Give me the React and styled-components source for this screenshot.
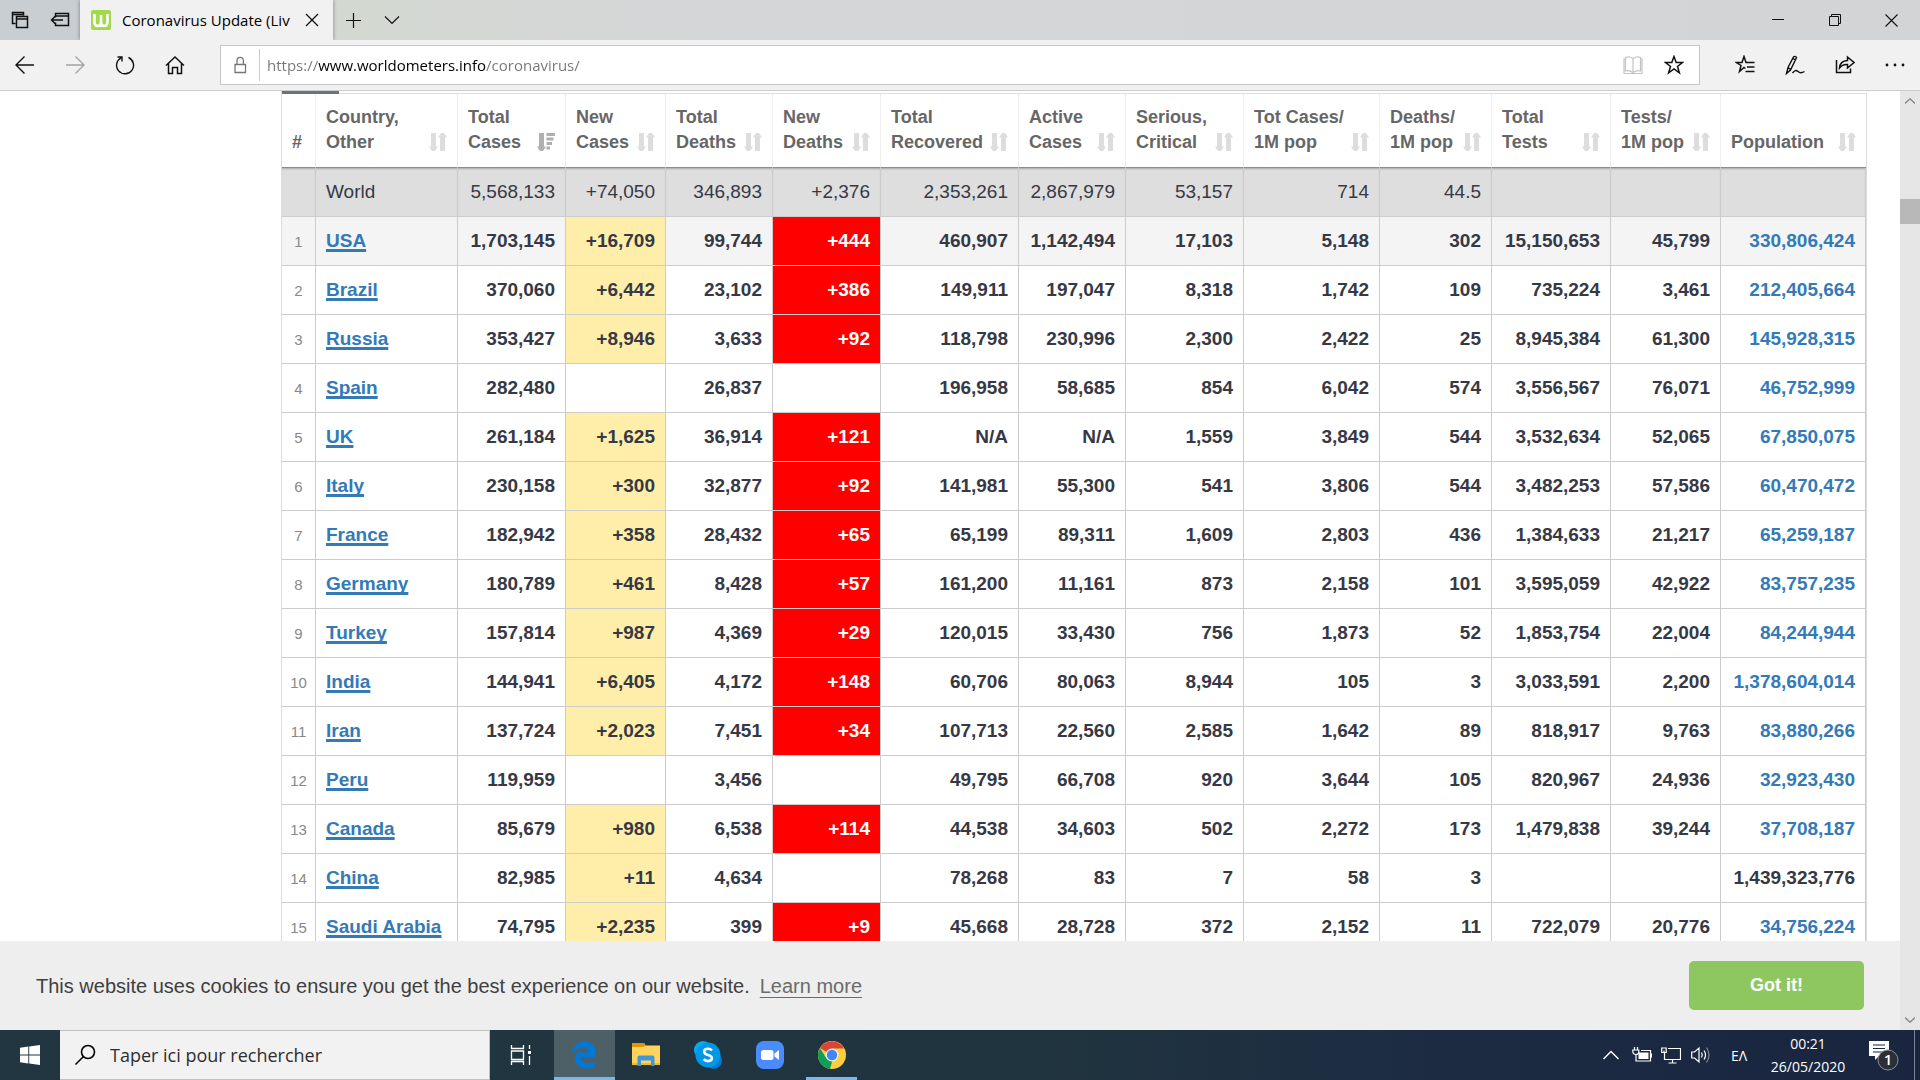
import React from 'react';
import styled, {createGlobalStyle, css} from "styled-components";

const UI_FONT = `"Open Sans", "Noto Sans", sans-serif`;
const PAGE_FONT = `"Liberation Sans", Arial, sans-serif`;

const GlobalStyle = createGlobalStyle`
  * {
    box-sizing: border-box;
  }

  body {
    margin: 0;
    overflow: hidden;
    font-family: ${PAGE_FONT};
  }

  button, input {
    font-family: inherit;
  }
`;

const Screen = styled.div`
  height: 100vh;
  display: flex;
  flex-direction: column;
  background: #ffffff;
`;

/* browser */

const TabBar = styled.div`
  height: 40px;
  flex: none;
  display: flex;
  background: linear-gradient(90deg, #c9ced2 0, #c9ced2 80px, #d3d9d1 340px, #d5d6d6 560px, #d3d4d6 100%);
`;

const IconButton = styled.button`
  width: ${({width}) => width || "50px"};
  height: 100%;
  flex: none;
  display: flex;
  justify-content: center;
  align-items: center;
  padding: 0;
  border: none;
  background: transparent;
  color: ${({tone}) => tone || "#111111"};
`;

const Tab = styled.div`
  width: 253px;
  display: flex;
  align-items: center;
  padding-left: 11px;
  background: #f1f1f1;
  box-shadow: 0 0 4px rgba(0, 0, 0, 0.4);
  clip-path: inset(0 -5px 0 -5px);
`;

const TabTitle = styled.span`
  flex: 1;
  margin-left: 11px;
  white-space: nowrap;
  font-family: ${UI_FONT};
  font-size: 15px;
  line-height: 20px;
  color: #000000;
`;

const Spacer = styled.div`
  flex: 1;
`;

const NavBar = styled.div`
  height: 51px;
  flex: none;
  display: flex;
  align-items: center;
  background: #f1f1f1;
  border-bottom: 1px solid #cccccc;
`;

const AddressBox = styled.label`
  height: 40px;
  flex: 1;
  display: flex;
  align-items: center;
  margin: 0 20px 0 20px;
  padding-right: 4px;
  background: #ffffff;
  border: 1px solid #c6c6c6;
`;

const AddressInput = styled.input`
  height: 32px;
  flex: 1;
  min-width: 0;
  padding: 0 0 0 7px;
  border: none;
  border-left: 1px solid #cccccc;
  outline: none;
  font-family: ${UI_FONT};
  font-size: 15px;
  color: transparent;
  background: linear-gradient(90deg, #767676 0, #767676 58px, #000000 58px, #000000 226px, #767676 226px);
  background-clip: text;
  -webkit-background-clip: text;
`;

/* page */

const Viewport = styled.div`
  flex: 1;
  min-height: 0;
  display: flex;
`;

const Page = styled.main`
  position: relative;
  flex: 1;
  min-width: 0;
  padding: 0 33px 0 281px;
  overflow: hidden;
`;

const ScrollBar = styled.div`
  width: 20px;
  flex: none;
  display: flex;
  flex-direction: column;
  align-items: center;
  background: #e6e6e6;
`;

const ScrollTrack = styled.div`
  width: 100%;
  flex: 1;
  padding-top: 88px;
`;

const ScrollThumb = styled.div`
  height: 25px;
  background: #b8b8b8;
`;

const ScrollArrow = styled.button`
  width: 20px;
  height: 20px;
  display: flex;
  justify-content: center;
  align-items: center;
  padding: 0;
  border: none;
  background: transparent;
  color: #858585;
`;

const TabStrip = styled.div`
  height: 3px;
  border-bottom: 1px solid #dddddd;
  border-left: 1px solid #dddddd;
`;

const ActiveTab = styled.div`
  width: 57px;
  height: 3px;
  background: #6a737b;
`;

const TableFrame = styled.div`
  border-left: 1px solid #dddddd;
  border-right: 1px solid #dddddd;
`;

const Table = styled.table`
  width: 100%;
  table-layout: fixed;
  border-spacing: 0;
  color: #363945;
`;

const HeadCell = styled.th`
  height: 74px;
  padding: 0 10px 12px 10px;
  vertical-align: bottom;
  text-align: left;
  font-size: 18px;
  line-height: 25px;
  color: #666666;
  border-right: 1px solid #eeeeee;
  border-bottom: 1px solid #8c8c8c;
  white-space: pre-line;

  &:last-child {
    border-right: none;
  }
`;

const HeadContent = styled.div`
  display: flex;
  justify-content: space-between;
  align-items: flex-end;
`;

const SortIcon = styled.svg`
  width: 18px;
  height: 18px;
  flex: none;
  margin-bottom: 4px;
  fill: ${({active}) => active ? "#b0b0b0" : "#dddddd"};
`;

const Cell = styled.td`
  height: 49px;
  padding: 0 10px 1px 10px;
  text-align: ${({align}) => align || "right"};
  font-size: 19px;
  font-weight: bold;
  line-height: 25px;
  white-space: nowrap;
  border-right: 1px solid #cccccc;
  border-bottom: 1px solid #cccccc;

  ${({tone}) => tone === "cases" && css`
    background: #ffeeaa;
  `}

  ${({tone}) => tone === "deaths" && css`
    background: #ff0000;
    color: #ffffff;
  `}
`;

const IndexCell = styled(Cell)`
  padding: 0;
  text-align: center;
  font-size: 15px;
  font-weight: normal;
  color: #888888;
`;

const WorldRow = styled.tr`
  background: #dedede;

  td {
    font-weight: normal;
  }

  td:nth-child(n) {
    box-shadow: inset 0 2px 2px -1px rgba(0, 0, 0, 0.25);
  }
`;

const CountryRow = styled.tr`
  background: ${({hovered}) => hovered ? "#f4f4f4" : "#ffffff"};
`;

const CountryLink = styled.a`
  color: #337ab7;
  text-decoration: underline;
  text-decoration-thickness: 3px;
  text-underline-offset: 2px;
  text-decoration-skip-ink: none;
`;

const PopulationLink = styled.a`
  color: #337ab7;
  text-decoration: none;
`;

const CookieBar = styled.div`
  position: absolute;
  left: 0;
  right: 0;
  bottom: 0;
  height: 89px;
  display: flex;
  justify-content: space-between;
  align-items: center;
  padding: 0 36px;
  background: #eeeeee;
  color: #404040;
  font-size: 20px;
  line-height: 30px;
`;

const LearnMore = styled.a`
  margin-left: 10px;
  color: #6b6b6b;
  text-decoration: underline;
  text-decoration-thickness: 1px;
  text-underline-offset: 4px;
`;

const GotIt = styled.button`
  width: 175px;
  height: 49px;
  border: none;
  border-radius: 5px;
  background: #8ec760;
  color: #ffffff;
  font-size: 18px;
  font-weight: bold;
`;

/* taskbar */

const TaskBar = styled.footer`
  height: 50px;
  flex: none;
  display: flex;
  font-family: ${UI_FONT};
  background: linear-gradient(90deg, #213640 0, #20343f 55%, #1c2b42 75%, #1a2540 100%);
`;

const TaskButton = styled.button`
  width: ${({width}) => width || "62px"};
  height: 50px;
  flex: none;
  display: flex;
  justify-content: center;
  align-items: center;
  padding: 0;
  border: none;
  background: ${({active}) => active ? "#4d6067" : "transparent"};
  box-shadow: ${({open}) => open ? "inset 0 -3px 0 #76b9ed" : "none"};
  color: #ffffff;
`;

const SearchBox = styled.label`
  width: 430px;
  display: flex;
  align-items: center;
  padding-left: 14px;
  background: #f2f2f2;
  border: 1px solid #bfbfbf;
  border-left: none;
`;

const SearchInput = styled.input`
  flex: 1;
  min-width: 0;
  margin-left: 14px;
  padding: 0;
  border: none;
  outline: none;
  background: transparent;
  font-family: ${UI_FONT};
  font-size: 18px;

  &::placeholder {
    color: #2e2e2e;
    opacity: 1;
  }
`;

const Apps = styled.div`
  display: flex;
  margin-right: 5px;
`;

const TrayText = styled.button`
  width: ${({width}) => width};
  padding: 0;
  border: none;
  background: transparent;
  color: #ffffff;
  font-family: ${UI_FONT};
  font-size: 14px;
  line-height: 23px;
  text-align: center;
`;

const ShowDesktop = styled.div`
  width: 6px;
  border-left: 1px solid #7b8494;
`;

const Line = ({size = 20, width = size, sw = 1.4, children}) => (
    <svg
        width={width} height={size} viewBox={`0 0 ${width} ${size}`}
        fill="none" stroke="currentColor" strokeWidth={sw} aria-hidden="true"
    >
        {children}
    </svg>
);

const columns = [
    {title: "#", width: 34},
    {title: "Country,\nOther", width: 142},
    {title: "Total\nCases", width: 108, active: true},
    {title: "New\nCases", width: 100},
    {title: "Total\nDeaths", width: 107},
    {title: "New\nDeaths", width: 108},
    {title: "Total\nRecovered", width: 138},
    {title: "Active\nCases", width: 107},
    {title: "Serious,\nCritical", width: 118},
    {title: "Tot Cases/\n1M pop", width: 136},
    {title: "Deaths/\n1M pop", width: 112},
    {title: "Total\nTests", width: 119},
    {title: "Tests/\n1M pop", width: 110},
    {title: "Population", width: 145},
];

const world = ["5,568,133", "+74,050", "346,893", "+2,376", "2,353,261", "2,867,979", "53,157", "714", "44.5", "", "", ""];

const countries = [
    ["USA", "1,703,145", "+16,709", "99,744", "+444", "460,907", "1,142,494", "17,103", "5,148", "302", "15,150,653", "45,799", "330,806,424"],
    ["Brazil", "370,060", "+6,442", "23,102", "+386", "149,911", "197,047", "8,318", "1,742", "109", "735,224", "3,461", "212,405,664"],
    ["Russia", "353,427", "+8,946", "3,633", "+92", "118,798", "230,996", "2,300", "2,422", "25", "8,945,384", "61,300", "145,928,315"],
    ["Spain", "282,480", "", "26,837", "", "196,958", "58,685", "854", "6,042", "574", "3,556,567", "76,071", "46,752,999"],
    ["UK", "261,184", "+1,625", "36,914", "+121", "N/A", "N/A", "1,559", "3,849", "544", "3,532,634", "52,065", "67,850,075"],
    ["Italy", "230,158", "+300", "32,877", "+92", "141,981", "55,300", "541", "3,806", "544", "3,482,253", "57,586", "60,470,472"],
    ["France", "182,942", "+358", "28,432", "+65", "65,199", "89,311", "1,609", "2,803", "436", "1,384,633", "21,217", "65,259,187"],
    ["Germany", "180,789", "+461", "8,428", "+57", "161,200", "11,161", "873", "2,158", "101", "3,595,059", "42,922", "83,757,235"],
    ["Turkey", "157,814", "+987", "4,369", "+29", "120,015", "33,430", "756", "1,873", "52", "1,853,754", "22,004", "84,244,944"],
    ["India", "144,941", "+6,405", "4,172", "+148", "60,706", "80,063", "8,944", "105", "3", "3,033,591", "2,200", "1,378,604,014"],
    ["Iran", "137,724", "+2,023", "7,451", "+34", "107,713", "22,560", "2,585", "1,642", "89", "818,917", "9,763", "83,880,266"],
    ["Peru", "119,959", "", "3,456", "", "49,795", "66,708", "920", "3,644", "105", "820,967", "24,936", "32,923,430"],
    ["Canada", "85,679", "+980", "6,538", "+114", "44,538", "34,603", "502", "2,272", "173", "1,479,838", "39,244", "37,708,187"],
    ["China", "82,985", "+11", "4,634", "", "78,268", "83", "7", "58", "3", "", "", "1,439,323,776"],
    ["Saudi Arabia", "74,795", "+2,235", "399", "+9", "45,668", "28,728", "372", "2,152", "11", "722,079", "20,776", "34,756,224"],
];

const getTone = (value, index) => {
    if (!value) return undefined;
    if (index === 1) return "cases";
    if (index === 3) return "deaths";
    return undefined;
};

const Sort = ({active}) => (
    <SortIcon viewBox="0 0 18 18" active={active ? 1 : undefined} aria-hidden="true">
        <path d="M2 0h5v13.500h2L6 18H3L0 13.500h2z"/>
        {active
            ? <path d="M9.500 0h8.500v3h-8.500zM9.500 4.500h7v3h-7zM9.500 9h5.500v3H9.500zM9.500 13.500h3.500v3H9.500z"/>
            : <path d="M11 18h5V4.500h2L15 0h-3L9 4.500h2z"/>}
    </SortIcon>
);

const BrowserTabs = () => (
    <TabBar>
        <IconButton width="40px" aria-label="Tabs set aside">
            <Line sw={1.5}>
                <path d="M5.500 13.500h-3v-11h11v3M2.500 4.500h11M6.500 6.500h11v11h-11zM6.500 9h11"/>
            </Line>
        </IconButton>
        <IconButton width="40px" aria-label="Set these tabs aside">
            <Line sw={1.5}>
                <path d="M5.500 7.500v-4h13v12h-13v-3M5.500 6h13M13 10H1.500M5 6.500L1.500 10L5 13.500"/>
            </Line>
        </IconButton>
        <Tab>
            <svg width="20" height="20" viewBox="0 0 20 20" aria-hidden="true">
                <rect width="20" height="20" rx="2" fill="#a2d94d"/>
                <path d="M3.500 4v8q0 4 3.200 4t3.300-4V5v7q0 4 3.200 4t3.300-4V4" fill="none" stroke="#fff" strokeWidth="2.600"/>
            </svg>
            <TabTitle>Coronavirus Update (Liv</TabTitle>
            <IconButton width="42px" aria-label="Close tab">
                <Line size={14} sw={1.3}><path d="M1 1l12 12M13 1L1 13"/></Line>
            </IconButton>
        </Tab>
        <IconButton width="40px" aria-label="New tab">
            <Line size={17} sw={1.2}><path d="M8.500 1v15M1 8.500h15"/></Line>
        </IconButton>
        <IconButton width="38px" aria-label="Tab previews">
            <Line size={16} sw={1.2}><path d="M1 4.500l7 7l7-7"/></Line>
        </IconButton>
        <Spacer/>
        <IconButton width="57px" aria-label="Minimize">
            <Line size={12} sw={1}><path d="M0 5.500h12"/></Line>
        </IconButton>
        <IconButton width="57px" aria-label="Restore">
            <Line size={12} sw={1}><path d="M.5 2.500h9v9h-9zM2.500 2.500v-2h9v9h-2"/></Line>
        </IconButton>
        <IconButton width="57px" aria-label="Close">
            <Line size={13} sw={1.1}><path d="M.5 .5l12 12M12.500 .5l-12 12"/></Line>
        </IconButton>
    </TabBar>
);

const BrowserNav = () => (
    <NavBar>
        <IconButton aria-label="Back">
            <Line sw={1.4}><path d="M19 10H1M9.500 1.500L1 10l8.500 8.500"/></Line>
        </IconButton>
        <IconButton tone="#a3a3a3" aria-label="Forward">
            <Line sw={1.4}><path d="M1 10h18M10.500 1.500L19 10l-8.500 8.500"/></Line>
        </IconButton>
        <IconButton aria-label="Refresh">
            <Line sw={1.4}>
                <path d="M13.500 2.500a8.500 8.500 0 1 1-7.500 .3M2.500 2h4.500v4.500"/>
            </Line>
        </IconButton>
        <IconButton aria-label="Home">
            <Line sw={1.5}>
                <path d="M1 10.500l9-8.500l9 8.500M3.500 8.500v10h4v-6h5v6h4v-10"/>
            </Line>
        </IconButton>
        <AddressBox>
            <IconButton as="span" width="38px" tone="#767676">
                <Line width={14} size={18} sw={1.3}>
                    <path d="M2 8.500h10.500v8H2zM4 8.500V4.500a3.200 3.200 0 0 1 6.400 0v4"/>
                </Line>
            </IconButton>
            <AddressInput aria-label="Address" defaultValue="https://www.worldometers.info/coronavirus/"/>
            <IconButton width="40px" tone="#c4c4c4" aria-label="Reading view">
                <Line sw={1.2}>
                    <path d="M10 3.500v14M10 3.500Q6 1 2.500 2.500v13.500Q6 15 10 17.500Q14 15 17.500 16V2.500Q14 1 10 3.500M2.500 4H1v14.500h18V4h-1.500"/>
                </Line>
            </IconButton>
            <IconButton width="42px" aria-label="Add to favorites">
                <Line sw={1.5}>
                    <path d="M10 1.500l2.200 6h6.300l-5 4l1.900 6.300L10 14l-5.400 3.800l1.900-6.300l-5-4h6.300z"/>
                </Line>
            </IconButton>
        </AddressBox>
        <IconButton aria-label="Favorites">
            <Line sw={1.5}>
                <path d="M10.500 13.500L9 12.500l-4.500 4l1.500-6L1.500 7.500h5.500L9 1.500l2 6h8.500M12 12h7.500M10.500 16.500h9"/>
            </Line>
        </IconButton>
        <IconButton aria-label="Add notes">
            <Line sw={1.4}>
                <path d="M1.500 18.500l1.500-6L8.500 2q1.500-1.500 3 .5L5.500 15zM3 12.500l2.500 2M8 3.500l2.500 1.500M7.500 18q3-4 5.500-1.500t6.500 0"/>
            </Line>
        </IconButton>
        <IconButton aria-label="Share">
            <Line sw={1.5}>
                <path d="M1.500 5v12.500h14v-4M4.500 13q.5-7 8-7.500V2l6.500 5.500l-6.500 5.500V9.500Q7.500 9 4.500 13z"/>
            </Line>
        </IconButton>
        <IconButton aria-label="Settings and more">
            <svg width="20" height="4" fill="currentColor" aria-hidden="true">
                <circle cx="2" cy="2" r="1.400"/><circle cx="10" cy="2" r="1.400"/><circle cx="18" cy="2" r="1.400"/>
            </svg>
        </IconButton>
    </NavBar>
);

const StatsTable = () => (
    <Table>
        <colgroup>
            {columns.map(({title, width}) => <col key={title} width={width}/>)}
        </colgroup>
        <thead>
            <tr>
                {columns.map(({title, active}, index) => (
                    <HeadCell key={title}>
                        <HeadContent>
                            {title}
                            {index > 0 && <Sort active={active}/>}
                        </HeadContent>
                    </HeadCell>
                ))}
            </tr>
        </thead>
        <tbody>
            <WorldRow>
                <IndexCell/>
                <Cell align="left">World</Cell>
                {world.map((value, index) => <Cell key={index}>{value}</Cell>)}
            </WorldRow>
            {countries.map(([name, ...values], row) => (
                <CountryRow key={name} hovered={row === 0 ? 1 : undefined}>
                    <IndexCell>{row + 1}</IndexCell>
                    <Cell align="left"><CountryLink href="#">{name}</CountryLink></Cell>
                    {values.map((value, index) => (
                        <Cell key={index} tone={getTone(value, index)}>
                            {index === 11 && name !== "China"
                                ? <PopulationLink href="#">{value}</PopulationLink>
                                : value}
                        </Cell>
                    ))}
                </CountryRow>
            ))}
        </tbody>
    </Table>
);

const WindowsTaskBar = () => (
    <TaskBar>
        <TaskButton width="60px" aria-label="Start">
            <svg width="20" height="20" viewBox="0 0 20 20" fill="currentColor" aria-hidden="true">
                <path d="M0 2.800L8.300 1.600v8H0zM9.200 1.500L20 0v9.600H9.200zM0 10.500h8.300v8L0 17.300zM9.200 10.500H20V20L9.200 18.600z"/>
            </svg>
        </TaskButton>
        <SearchBox>
            <Line width={22} size={22} sw={1.6}><circle cx="14" cy="8" r="6.500"/><path d="M9.500 12.500L1.500 20.500"/></Line>
            <SearchInput aria-label="Rechercher" placeholder="Taper ici pour rechercher"/>
        </SearchBox>
        <TaskButton width="64px" aria-label="Task view">
            <Line width={24} size={20} sw={1.3}>
                <path d="M1.500 0v3.500h12V0M1.500 6h12v8.500h-12zM1.500 20v-3.500h12V20M19.500 0v4M19.500 11v9"/>
                <path d="M18 6h3v3h-3z" fill="currentColor" stroke="none"/>
            </Line>
        </TaskButton>
        <TaskButton width="61px" active={1} open={1} aria-label="Edge">
            <svg width="26" height="28" viewBox="0 0 26 28" aria-hidden="true">
                <path d="M0 12.500C1 5 6 .5 12.500 .5C19.500 .5 24 5.500 24 12.500V16H8.500C9 20 12.500 22 16 22c2.500 0 4.500-.8 6.500-2v5.500C20.500 27 17.500 27.500 14.500 27.500C7.500 27.500 3 23 3 17.500c0-4 2-7 5.500-8.500C8 10 8 11 8 11.500h8.500C16.500 8.500 15 6.500 11.500 6.500C7 6.500 3 8.500 0 12.500z" fill="#0078d7"/>
            </svg>
        </TaskButton>
        <Apps>
            <TaskButton aria-label="Files">
                <svg width="28" height="24" viewBox="0 0 28 24" aria-hidden="true">
                    <path d="M0 0h12l1.500 2.500H28V22H0z" fill="#ffd35c"/>
                    <path d="M0 0h12l1 2l-1 2H0z" fill="#dc9a00"/>
                    <path d="M0 20h28v2H0z" fill="#f2b92e"/>
                    <path d="M5.500 23V14.500q0-2 2-2h13q2 0 2 2V23H19v-5.500H9V23z" fill="#3f96dd"/>
                </svg>
            </TaskButton>
            <TaskButton aria-label="Skype">
                <svg width="28" height="28" viewBox="0 0 28 28" aria-hidden="true">
                    <circle cx="9" cy="9" r="9" fill="#00aff0"/>
                    <circle cx="19.500" cy="19.500" r="8.500" fill="#0078d4"/>
                    <circle cx="14" cy="14" r="12.500" fill="#0098e4"/>
                    <path d="M18 9.500q-1.500-1.700-4-1.700q-3.800 0-3.800 2.900q0 2.300 3.800 3.200t3.900 3.200q0 3-4 3q-2.500 0-4.200-1.900" fill="none" stroke="#fff" strokeWidth="2.600"/>
                </svg>
            </TaskButton>
            <TaskButton aria-label="Zoom">
                <svg width="28" height="28" viewBox="0 0 28 28" aria-hidden="true">
                    <rect width="28" height="28" rx="8" fill="#4a8cff"/>
                    <rect x="5" y="9" width="12.500" height="10" rx="2.500" fill="#fff"/>
                    <path d="M18.500 12.500L23 9v10l-4.500-3.500z" fill="#fff"/>
                </svg>
            </TaskButton>
        </Apps>
        <TaskButton open={1} width="51px" aria-label="Chrome">
            <svg width="28" height="28" viewBox="0 0 28 28" aria-hidden="true">
                <circle cx="14" cy="14" r="14" fill="#ffcd40"/>
                <path d="M14 14L1.900 7A14 14 0 0 1 26.100 7.500H14z" fill="#db4437"/>
                <path d="M1.900 7L8.500 17.500L14 20.500V21L12 27.900A14 14 0 0 1 1.900 7z" fill="#0f9d58"/>
                <circle cx="14" cy="14" r="6.500" fill="#f1f1f1"/>
                <circle cx="14" cy="14" r="5.200" fill="#4285f4"/>
            </svg>
        </TaskButton>
        <Spacer/>
        <TaskButton width="32px" aria-label="Show hidden icons">
            <Line width={16} size={10}><path d="M.5 9L8 1.500L15.500 9"/></Line>
        </TaskButton>
        <TaskButton width="29px" aria-label="Battery">
            <Line width={20} size={16} sw={1.2}>
                <path d="M2.500 3V0M5.500 3V0M.8 3h6v2q0 2.500-2.800 2.500T.8 5zM4 7.500V14h14.500V3.500H9"/>
                <path d="M6.500 5.500h10v6.500h-10zM18.500 6.500H20v4h-1.500z" fill="currentColor" stroke="none"/>
            </Line>
        </TaskButton>
        <TaskButton width="30px" aria-label="Network">
            <Line width={20} size={17} sw={1.2}>
                <path d="M7 1.500h12.500v11H3.500V6M11.500 12.500v3.500M7.500 16h8M.7 1h4.500v4.500H.7zM3 3.500v2.500"/>
            </Line>
        </TaskButton>
        <TaskButton width="30px" aria-label="Volume">
            <Line width={20} size={18} sw={1.2}>
                <path d="M.7 6h2.800L8 2v14l-4.500-4H.7zM10.500 6.500q1.500 2.500 0 5M13 4.500q3 4.500 0 9"/>
                <path d="M15.500 1.500q5 7.500 0 15" opacity=".45"/>
            </Line>
        </TaskButton>
        <TrayText width="46px">ΕΛ</TrayText>
        <TrayText width="92px">00:21<br/>26/05/2020</TrayText>
        <TaskButton width="60px" aria-label="Notifications">
            <svg width="32" height="32" viewBox="0 0 32 32" aria-hidden="true">
                <path d="M1 2h20v15H11l-4 4v-4H1z" fill="#fff"/>
                <path d="M5 6h12M5 9.500h12M5 13h12" stroke="#1a2540" strokeWidth="1.200"/>
                <circle cx="20" cy="21" r="10" fill="#2b2f36" stroke="#8b8f96"/>
                <text x="20" y="26" textAnchor="middle" fontSize="15" fontWeight="600" fill="#fff">1</text>
            </svg>
        </TaskButton>
        <ShowDesktop/>
    </TaskBar>
);

const App = () => {

    return (
        <Screen>
            <GlobalStyle/>
            <BrowserTabs/>
            <BrowserNav/>
            <Viewport>
                <Page>
                    <TabStrip><ActiveTab/></TabStrip>
                    <TableFrame>
                        <StatsTable/>
                    </TableFrame>
                    <CookieBar>
                        <span>
                            This website uses cookies to ensure you get the best experience on our website.
                            <LearnMore href="#">Learn more</LearnMore>
                        </span>
                        <GotIt>Got it!</GotIt>
                    </CookieBar>
                </Page>
                <ScrollBar>
                    <ScrollArrow aria-label="Scroll up">
                        <Line width={10} size={6} sw={1.3}><path d="M0 5.500L5 .8l5 4.700"/></Line>
                    </ScrollArrow>
                    <ScrollTrack><ScrollThumb/></ScrollTrack>
                    <ScrollArrow aria-label="Scroll down">
                        <Line width={10} size={6} sw={1.3}><path d="M0 .5L5 5.200l5-4.700"/></Line>
                    </ScrollArrow>
                </ScrollBar>
            </Viewport>
            <WindowsTaskBar/>
        </Screen>
    );
};

export default App;
